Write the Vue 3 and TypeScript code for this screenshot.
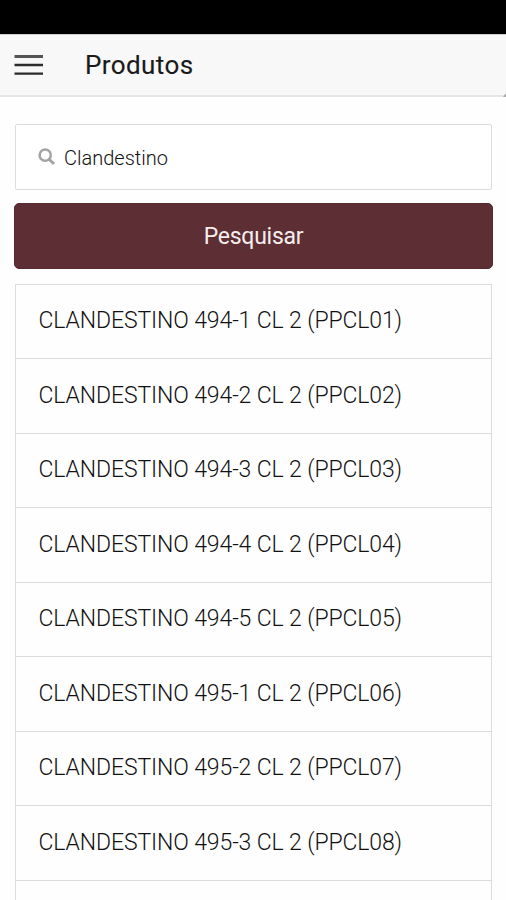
<script setup lang="ts">
import { ref } from 'vue'

interface Product {
  name: string
  code: string
}

const query = ref<string>('Clandestino')

const products: Product[] = [
  { name: 'CLANDESTINO 494-1 CL 2', code: 'PPCL01' },
  { name: 'CLANDESTINO 494-2 CL 2', code: 'PPCL02' },
  { name: 'CLANDESTINO 494-3 CL 2', code: 'PPCL03' },
  { name: 'CLANDESTINO 494-4 CL 2', code: 'PPCL04' },
  { name: 'CLANDESTINO 494-5 CL 2', code: 'PPCL05' },
  { name: 'CLANDESTINO 495-1 CL 2', code: 'PPCL06' },
  { name: 'CLANDESTINO 495-2 CL 2', code: 'PPCL07' },
  { name: 'CLANDESTINO 495-3 CL 2', code: 'PPCL08' },
]
</script>

<template>
  <div class="screen">
    <div class="status-bar"></div>
    <header class="toolbar">
      <button class="menu" type="button">
        <svg width="29" height="22" viewBox="0 0 29 22">
          <path d="M0.5 2.5h28.5" fill="none" stroke="#555" stroke-width="3" />
          <path d="M0.5 11h28.5M0.5 19.6h28.5" fill="none" stroke="#2b2b2b" stroke-width="2.4" />
        </svg>
      </button>
      <h1 class="title">Produtos</h1>
      <svg class="corner" width="3" height="4" viewBox="0 0 3 4">
        <path d="M3 0V4H0Z" fill="#aaa" />
      </svg>
    </header>
    <main class="content">
      <label class="search">
        <svg class="search-icon" width="18" height="18" viewBox="0 0 18 18">
          <circle cx="7.2" cy="7.2" r="5.6" fill="none" stroke="#a3a3a3" stroke-width="2.5" />
          <path d="M11.2 11.2L16 16" fill="none" stroke="#a3a3a3" stroke-width="3" />
        </svg>
        <input v-model="query" class="search-input" type="text" />
      </label>
      <button class="submit" type="button">Pesquisar</button>
      <ul class="list">
        <li v-for="product in products" :key="product.code" class="item">
          <span>{{ product.name }} ({{ product.code }})</span>
        </li>
        <li class="item"></li>
      </ul>
    </main>
  </div>
</template>

<style>
body {
  margin: 0;
  background: #fff;
}
</style>

<style scoped>
.screen {
  display: flex;
  flex-direction: column;
  height: 900px;
  overflow: hidden;
  background: #fefefe;
  font-family: Roboto, "Liberation Sans", sans-serif;
  color: #222;
}

.status-bar {
  flex: none;
  height: 34px;
  background: #000;
}

.toolbar {
  position: relative;
  flex: none;
  box-sizing: border-box;
  display: flex;
  align-items: center;
  height: 63px;
  padding-left: 14px;
  background: #f8f8f8;
  border-top: 1px solid #cfcfcf;
  border-bottom: 2px solid #e5e5e5;
}

.corner {
  position: absolute;
  right: 0;
  bottom: -2px;
}

.menu {
  display: flex;
  padding: 0;
  border: 0;
  background: none;
}

.title {
  margin: 0 0 0 42px;
  font-size: 26px;
  font-weight: 400;
  line-height: 32px;
  letter-spacing: 0.4px;
  color: #1a1a1a;
  -webkit-text-stroke: 0.12px #1a1a1a;
}

.content {
  flex: 1;
  min-height: 0;
  display: flex;
  flex-direction: column;
  padding: 27px 13px 0 14px;
}

.search {
  flex: none;
  box-sizing: border-box;
  display: flex;
  align-items: center;
  height: 66px;
  margin: 0 1px;
  padding-left: 22px;
  border: 1px solid #dcdcdc;
  border-radius: 2px;
  background: #fff;
}

.search-icon {
  flex: none;
  margin-bottom: 1px;
}

.search-input {
  flex: 1;
  min-width: 0;
  margin-left: 8px;
  padding: 2px 0 0;
  border: 0;
  outline: 0;
  background: none;
  font: 300 20px/24px Roboto, "Liberation Sans", sans-serif;
  color: #111;
}

.submit {
  flex: none;
  height: 66px;
  margin: 13px 0 14.5px;
  padding: 2px 0 0;
  border: 1px solid #55292f;
  border-radius: 5px;
  background: #5d2e34;
  color: #f6eeee;
  font: 400 23px/28px Roboto, "Liberation Sans", sans-serif;
  letter-spacing: -0.25px;
}

.list {
  flex: none;
  margin: 0 1px;
  padding: 0;
  list-style: none;
  border: solid #dcdcdc;
  border-width: 0 1px;
}

.item {
  box-sizing: border-box;
  display: flex;
  align-items: center;
  height: 74.55px;
  padding: 0 0 0.4px 22.5px;
  border-top: 1px solid #dcdcdc;
  color: #111;
  font-size: 23px;
  font-weight: 300;
  line-height: 28px;
  letter-spacing: -0.12px;
}
</style>
